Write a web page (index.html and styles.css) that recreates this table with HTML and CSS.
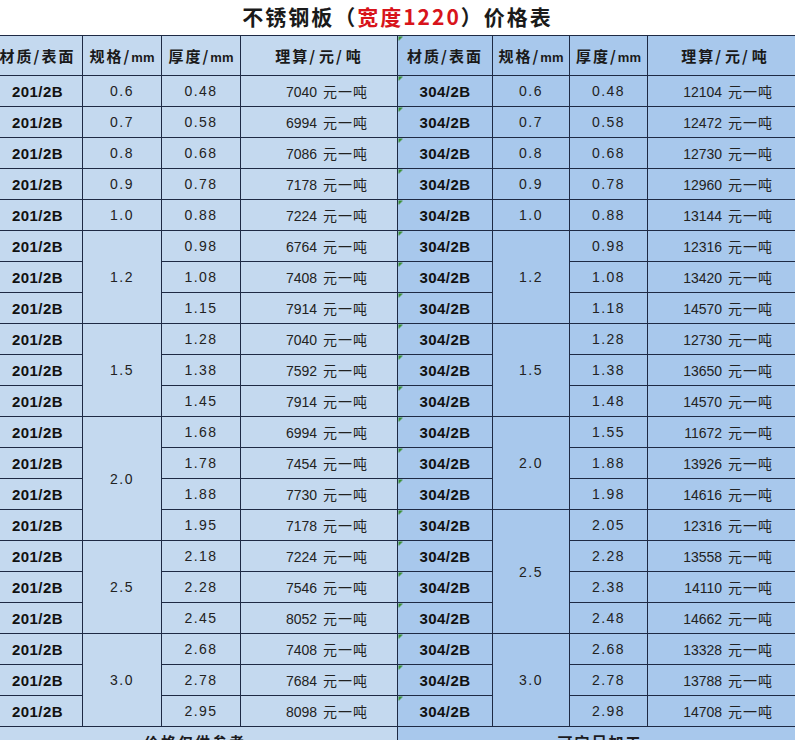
FILE: index.html
```html
<!DOCTYPE html>
<html lang="zh-CN">
<head>
<meta charset="utf-8">
<title>不锈钢板（宽度1220）价格表</title>
<link rel="stylesheet" href="styles.css">
</head>
<body>
<h1 class="title">不锈钢板（<span class="red">宽度1220</span>）价格表</h1>
<div class="sheet">
<table class="grid">
<colgroup>
<col class="cl w1"><col class="cl w2"><col class="cl w3"><col class="cl w4">
<col class="cr w5"><col class="cr w6"><col class="cr w7"><col class="cr w8">
</colgroup>
<thead>
<tr class="head">
<th>材质/表面</th><th>规格/<span class="mm">mm</span></th><th>厚度/<span class="mm">mm</span></th><th>理算<span class="sl">/</span>元<span class="sl">/</span>吨</th>
<th class="g">材质/表面</th><th>规格/<span class="mm">mm</span></th><th>厚度/<span class="mm">mm</span></th><th>理算<span class="sl">/</span>元<span class="sl">/</span>吨</th>
</tr>
</thead>
<tbody>
<tr><td class="m">201/2B</td><td class="s">0.6</td><td class="s">0.48</td><td class="p">7040 <span class="u">元一吨</span></td><td class="m g">304/2B</td><td class="s">0.6</td><td class="s">0.48</td><td class="p">12104 <span class="u">元一吨</span></td></tr>
<tr><td class="m">201/2B</td><td class="s">0.7</td><td class="s">0.58</td><td class="p">6994 <span class="u">元一吨</span></td><td class="m g">304/2B</td><td class="s">0.7</td><td class="s">0.58</td><td class="p">12472 <span class="u">元一吨</span></td></tr>
<tr><td class="m">201/2B</td><td class="s">0.8</td><td class="s">0.68</td><td class="p">7086 <span class="u">元一吨</span></td><td class="m g">304/2B</td><td class="s">0.8</td><td class="s">0.68</td><td class="p">12730 <span class="u">元一吨</span></td></tr>
<tr><td class="m">201/2B</td><td class="s">0.9</td><td class="s">0.78</td><td class="p">7178 <span class="u">元一吨</span></td><td class="m g">304/2B</td><td class="s">0.9</td><td class="s">0.78</td><td class="p">12960 <span class="u">元一吨</span></td></tr>
<tr><td class="m">201/2B</td><td class="s">1.0</td><td class="s">0.88</td><td class="p">7224 <span class="u">元一吨</span></td><td class="m g">304/2B</td><td class="s">1.0</td><td class="s">0.88</td><td class="p">13144 <span class="u">元一吨</span></td></tr>

<tr><td class="m">201/2B</td><td class="s" rowspan="3">1.2</td><td class="s">0.98</td><td class="p">6764 <span class="u">元一吨</span></td><td class="m g">304/2B</td><td class="s" rowspan="3">1.2</td><td class="s">0.98</td><td class="p">12316 <span class="u">元一吨</span></td></tr>
<tr><td class="m">201/2B</td><td class="s">1.08</td><td class="p">7408 <span class="u">元一吨</span></td><td class="m g">304/2B</td><td class="s">1.08</td><td class="p">13420 <span class="u">元一吨</span></td></tr>
<tr><td class="m">201/2B</td><td class="s">1.15</td><td class="p">7914 <span class="u">元一吨</span></td><td class="m g">304/2B</td><td class="s">1.18</td><td class="p">14570 <span class="u">元一吨</span></td></tr>

<tr><td class="m">201/2B</td><td class="s" rowspan="3">1.5</td><td class="s">1.28</td><td class="p">7040 <span class="u">元一吨</span></td><td class="m g">304/2B</td><td class="s" rowspan="3">1.5</td><td class="s">1.28</td><td class="p">12730 <span class="u">元一吨</span></td></tr>
<tr><td class="m">201/2B</td><td class="s">1.38</td><td class="p">7592 <span class="u">元一吨</span></td><td class="m g">304/2B</td><td class="s">1.38</td><td class="p">13650 <span class="u">元一吨</span></td></tr>
<tr><td class="m">201/2B</td><td class="s">1.45</td><td class="p">7914 <span class="u">元一吨</span></td><td class="m g">304/2B</td><td class="s">1.48</td><td class="p">14570 <span class="u">元一吨</span></td></tr>

<tr><td class="m">201/2B</td><td class="s" rowspan="4">2.0</td><td class="s">1.68</td><td class="p">6994 <span class="u">元一吨</span></td><td class="m g">304/2B</td><td class="s" rowspan="3">2.0</td><td class="s">1.55</td><td class="p">11672 <span class="u">元一吨</span></td></tr>
<tr><td class="m">201/2B</td><td class="s">1.78</td><td class="p">7454 <span class="u">元一吨</span></td><td class="m g">304/2B</td><td class="s">1.88</td><td class="p">13926 <span class="u">元一吨</span></td></tr>
<tr><td class="m">201/2B</td><td class="s">1.88</td><td class="p">7730 <span class="u">元一吨</span></td><td class="m g">304/2B</td><td class="s">1.98</td><td class="p">14616 <span class="u">元一吨</span></td></tr>
<tr><td class="m">201/2B</td><td class="s">1.95</td><td class="p">7178 <span class="u">元一吨</span></td><td class="m g">304/2B</td><td class="s" rowspan="4">2.5</td><td class="s">2.05</td><td class="p">12316 <span class="u">元一吨</span></td></tr>

<tr><td class="m">201/2B</td><td class="s" rowspan="3">2.5</td><td class="s">2.18</td><td class="p">7224 <span class="u">元一吨</span></td><td class="m g">304/2B</td><td class="s">2.28</td><td class="p">13558 <span class="u">元一吨</span></td></tr>
<tr><td class="m">201/2B</td><td class="s">2.28</td><td class="p">7546 <span class="u">元一吨</span></td><td class="m g">304/2B</td><td class="s">2.38</td><td class="p">14110 <span class="u">元一吨</span></td></tr>
<tr><td class="m">201/2B</td><td class="s">2.45</td><td class="p">8052 <span class="u">元一吨</span></td><td class="m g">304/2B</td><td class="s">2.48</td><td class="p">14662 <span class="u">元一吨</span></td></tr>

<tr><td class="m">201/2B</td><td class="s" rowspan="3">3.0</td><td class="s">2.68</td><td class="p">7408 <span class="u">元一吨</span></td><td class="m g">304/2B</td><td class="s" rowspan="3">3.0</td><td class="s">2.68</td><td class="p">13328 <span class="u">元一吨</span></td></tr>
<tr><td class="m">201/2B</td><td class="s">2.78</td><td class="p">7684 <span class="u">元一吨</span></td><td class="m g">304/2B</td><td class="s">2.78</td><td class="p">13788 <span class="u">元一吨</span></td></tr>
<tr><td class="m">201/2B</td><td class="s">2.95</td><td class="p">8098 <span class="u">元一吨</span></td><td class="m g">304/2B</td><td class="s">2.98</td><td class="p">14708 <span class="u">元一吨</span></td></tr>

<tr class="note"><td colspan="4">价格仅供参考</td><td colspan="4">可定尺加工</td></tr>
</tbody>
</table>
</div>
</body>
</html>
```

FILE: styles.css
```css
html, body {
  margin: 0;
  padding: 0;
  background: #ffffff;
}
body {
  width: 795px;
  height: 740px;
  overflow: hidden;
  font-family: "Noto Sans CJK SC", "Liberation Sans", sans-serif;
  color: #1b1b1f;
}
.title {
  margin: 0;
  height: 35px;
  line-height: 32px;
  text-align: center;
  font-size: 21px;
  font-weight: 700;
  letter-spacing: 2px;
  color: #1a1a1a;
}
.title .red {
  color: #d8141b;
}
.sheet {
  display: flex;
  justify-content: center;
  overflow: hidden;
}
.grid {
  flex: none;
  table-layout: fixed;
  border-collapse: collapse;
  width: 810px;
}
.cl { background: #c4d9ef; }
.cr { background: #a8c8ec; }
.w1 { width: 90px; }
.w2 { width: 79px; }
.w3 { width: 79px; }
.w4 { width: 157px; }
.w5 { width: 95px; }
.w6 { width: 77px; }
.w7 { width: 78px; }
.w8 { width: 155px; }
.grid th, .grid td {
  border: 1px solid #1e2a44;
  padding: 0;
  text-align: center;
  vertical-align: middle;
  white-space: nowrap;
  overflow: hidden;
}
.head th {
  height: 39px;
  font-size: 15px;
  font-weight: 700;
  letter-spacing: 2px;
  color: #1a1a1a;
}
.head .mm {
  font-family: "Liberation Sans", sans-serif;
  font-size: 13px;
  letter-spacing: 0;
}
.head .sl {
  letter-spacing: 4px;
}
.grid td {
  height: 30px;
}
.m {
  font-family: "Liberation Sans", sans-serif;
  font-weight: 700;
  font-size: 15px;
  letter-spacing: 0.4px;
  color: #111;
}
.s {
  font-family: "Liberation Sans", sans-serif;
  font-size: 14px;
  letter-spacing: 1.5px;
  color: #222;
}
.p {
  text-align: right !important;
  padding-right: 29px !important;
  font-family: "Liberation Sans", sans-serif;
  font-size: 14px;
  color: #222;
}
.u {
  font-family: "Noto Sans CJK SC", sans-serif;
  font-size: 14px;
  letter-spacing: 1px;
  margin-left: 2px;
}
.g {
  background-image: linear-gradient(135deg, #3a8f2f 0, #3a8f2f 3px, transparent 3px);
}
.note td {
  height: 40px;
  vertical-align: top;
  padding-top: 4px;
  font-size: 15px;
  font-weight: 700;
  letter-spacing: 2px;
}
```
